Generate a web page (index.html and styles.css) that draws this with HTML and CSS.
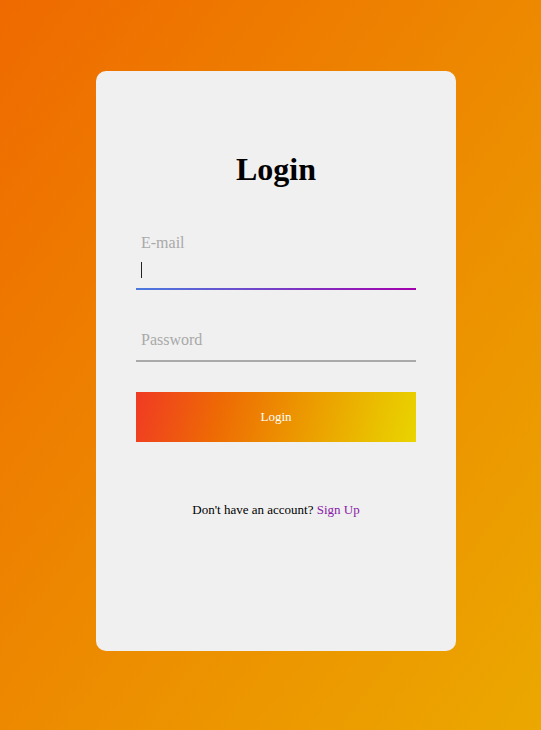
FILE: index.html
```html
<!DOCTYPE html>
<html lang="en">
<head>
<meta charset="utf-8">
<title>Login</title>
<link rel="stylesheet" href="styles.css">
</head>
<body>
<div class="page">
  <div class="card">
    <h1 class="title">Login</h1>
    <div class="field field-focused">
      <label class="label label-up">E-mail</label>
      <div class="box"><span class="caret"></span></div>
      <div class="line line-active"></div>
    </div>
    <div class="field field-pass">
      <div class="box"><span class="label">Password</span></div>
      <div class="line"></div>
    </div>
    <button class="btn">Login</button>
    <p class="footer">Don't have an account? <a class="link" href="#">Sign Up</a></p>
  </div>
</div>
</body>
</html>
```

FILE: styles.css
```css
html, body {
  margin: 0;
  padding: 0;
  height: 100%;
}
body {
  background: linear-gradient(to bottom right, #ef6a00, #eba800);
  font-family: "Liberation Serif", "Times New Roman", serif;
}
.page {
  padding: 71px 0 0 96px;
}
.card {
  width: 360px;
  height: 580px;
  box-sizing: border-box;
  background: #f0f0f0;
  border-radius: 10px;
  padding: 80px 40px 0;
  display: flex;
  flex-direction: column;
}
.title {
  margin: 0;
  font-size: 32px;
  line-height: 37px;
  font-weight: bold;
  text-align: center;
  color: #000;
}
.field {
  display: flex;
  flex-direction: column;
}
.field-focused {
  margin-top: 46px;
}
.label {
  font-size: 16px;
  line-height: 18px;
  color: #a9a9a9;
  padding-left: 5px;
}
.box {
  height: 36px;
  display: flex;
  align-items: center;
}
.field-pass {
  margin-top: 34px;
}
.field-pass .box {
  align-items: flex-start;
  padding-top: 7px;
  height: 29px;
}
.caret {
  display: block;
  width: 1px;
  height: 16px;
  background: #222;
  margin-left: 5px;
}
.line {
  height: 2px;
  background: #aaaaaa;
}
.line-active {
  background: linear-gradient(to right, #4a7ade, #a300ad);
}
.btn {
  margin-top: 30px;
  height: 50px;
  border: none;
  padding: 0;
  background: linear-gradient(105deg, #f03a24 0%, #ee6a04 30%, #ec9a00 60%, #eac000 85%, #e9d400 100%);
  color: #fff;
  font-family: "Liberation Serif", "Times New Roman", serif;
  font-size: 13px;
}
.footer {
  margin: 60px 0 0;
  font-size: 13px;
  line-height: 15px;
  text-align: center;
  color: #000;
}
.link {
  color: #8a1aa6;
  text-decoration: none;
}
```
